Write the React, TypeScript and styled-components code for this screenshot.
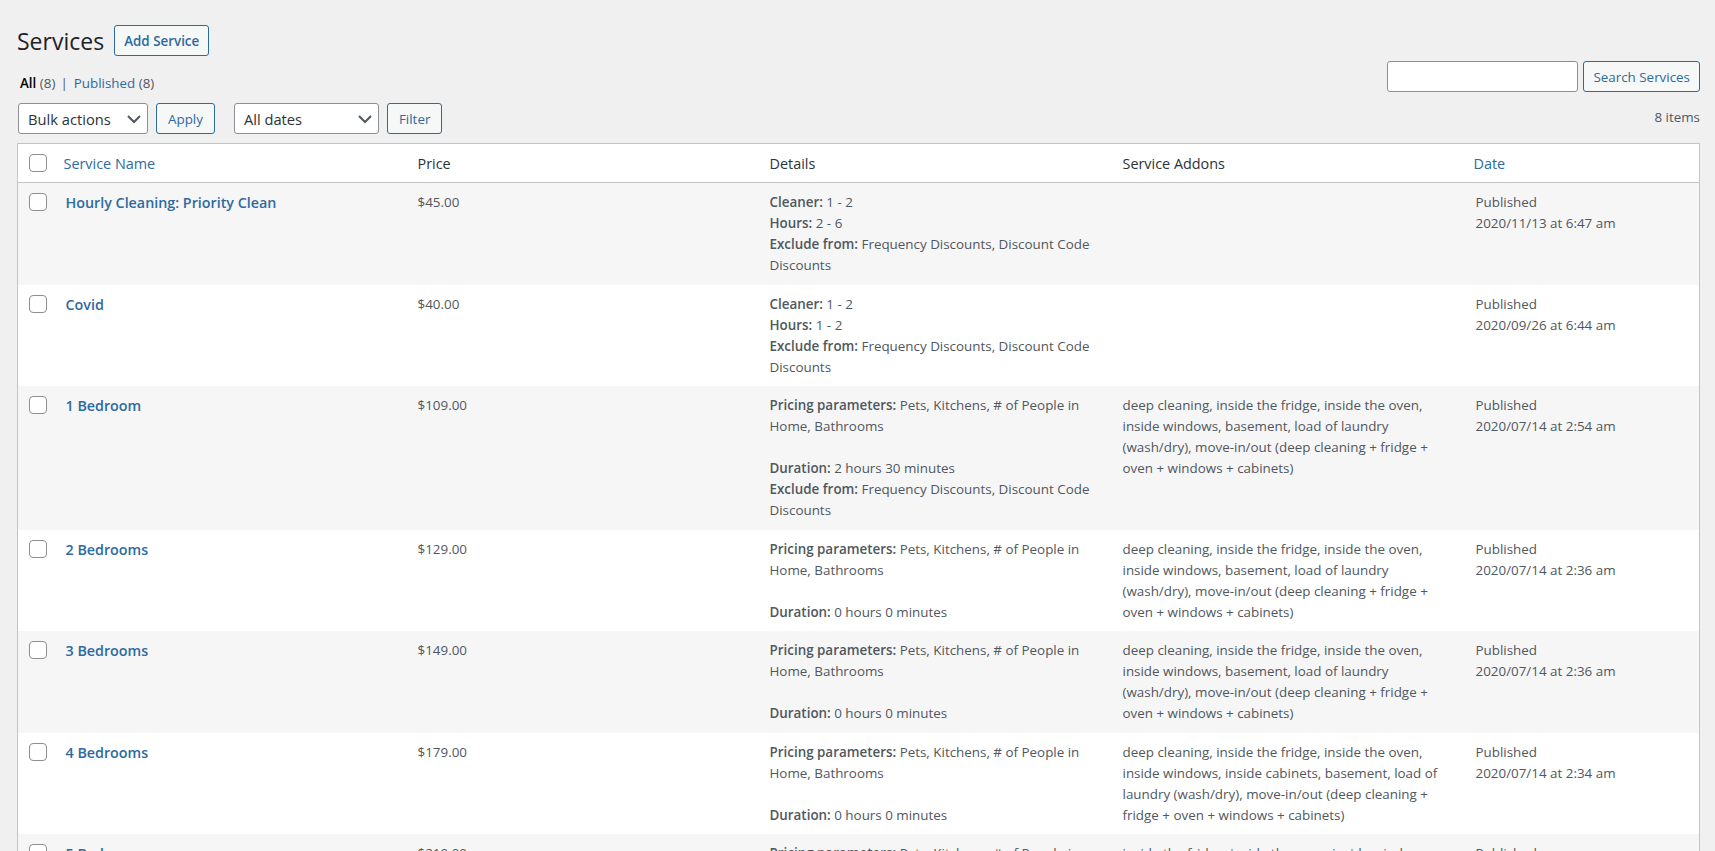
import styled, { createGlobalStyle } from "styled-components";

const GlobalStyle = createGlobalStyle`
  html, body {
    margin: 0;
    height: 851px;
    overflow: hidden;
    background: #f0f0f1;
    font-family: "Open Sans", "Noto Sans", sans-serif;
    font-size: 13.4px;
    color: #50575e;
  }
`;

const Wrap = styled.div`
  padding: 25px 15px 0 17px;
`;

const TitleRow = styled.div`
  display: flex;
  align-items: center;
  gap: 10px;
  height: 31px;
`;

const Title = styled.h1`
  margin: 0;
  font-size: 23px;
  font-weight: 400;
  color: #1d2327;
`;

const Button = styled.button<{ $strong?: boolean; $tight?: boolean }>`
  height: 31px;
  padding: 0 ${(p) => (p.$strong || p.$tight ? 9 : 11)}px;
  border: 1px solid #2d6a9f;
  border-radius: 3px;
  background: #f6f7f7;
  color: #2d6a9f;
  font: inherit;
  font-weight: ${(p) => (p.$strong ? 600 : 400)};
`;

const TopSplit = styled.div`
  display: flex;
  justify-content: space-between;
  align-items: flex-start;
`;

const Tabs = styled.div`
  margin: 17px 0 0 3px;
  line-height: 20px;
`;

const TabLink = styled.a<{ $current?: boolean }>`
  color: ${(p) => (p.$current ? "#000" : "#2d6a9f")};
  font-weight: ${(p) => (p.$current ? 600 : 400)};
`;

const Sep = styled.span`
  margin: 0 6px 0 5px;
`;

const Bar = styled.div`
  display: flex;
  align-items: center;
  margin: 10px 0 0 1px;
  gap: 8px;
`;

const Select = styled.div<{ $w: number; $after?: number }>`
  width: ${(p) => p.$w}px;
  height: 31px;
  box-sizing: border-box;
  padding: 0 3px 0 9px;
  display: flex;
  align-items: center;
  justify-content: space-between;
  border: 1px solid #8c8f94;
  border-radius: 3px;
  background: #fff;
  color: #2c3338;
  font-size: 14.7px;
  margin-left: ${(p) => p.$after ?? 0}px;
`;

const Search = styled.div`
  display: flex;
  gap: 5px;
  margin-top: 36px;
`;

const SearchInput = styled.input`
  width: 191px;
  height: 31px;
  box-sizing: border-box;
  border: 1px solid #8c8f94;
  border-radius: 3px;
  background: #fff;
`;

const Count = styled.div`
  text-align: right;
  margin-top: 15px;
  line-height: 20px;
`;

const Table = styled.table`
  width: 100%;
  margin-top: 9px;
  table-layout: fixed;
  border-collapse: collapse;
  border: 1px solid #c3c4c7;
  background: #fff;
`;

const Th = styled.th<{ $w?: number; $link?: boolean }>`
  box-sizing: border-box;
  width: ${(p) => (p.$w ? `${p.$w}px` : "auto")};
  height: 39px;
  padding: 0 9px;
  text-align: left;
  font-weight: 400;
  font-size: 14.4px;
  color: ${(p) => (p.$link ? "#2d6a9f" : "#2c3338")};
  border-bottom: 1px solid #c3c4c7;
`;

const Tr = styled.tr`
  &:nth-child(odd) {
    background: #f6f6f7;
  }
`;

const Td = styled.td`
  padding: 9px 9px 8.5px;
  vertical-align: top;
  line-height: 21px;
`;

const DateTd = styled(Td)`
  padding-left: 11px;
`;

const NameLink = styled.a`
  display: block;
  margin-left: 2px;
  color: #2d6a9f;
  font-size: 14.3px;
  font-weight: 600;
`;

const CheckCell = styled.td`
  padding: 10px 0 0 11px;
  vertical-align: top;
`;

const CheckHead = styled.th`
  width: 37px;
  padding: 0 0 0 11px;
  box-sizing: border-box;
  border-bottom: 1px solid #c3c4c7;
  text-align: left;
`;

const Check = styled.span`
  display: block;
  box-sizing: border-box;
  width: 18px;
  height: 18px;
  border: 1px solid #8c8f94;
  border-radius: 4px;
  background: #fff;
`;

const Strong = styled.b`
  font-weight: 600;
`;

const Line = styled.div`
  min-height: 21px;
`;

const Chevron = () => (
  <svg width="20" height="20" viewBox="0 0 20 20" fill="none" stroke="#50575e" strokeWidth="2">
    <path d="M4 7l6 6 6-6" />
  </svg>
);

type Part = { label?: string; text?: string };

const pricing = (d: string): Part[] => [
  { label: "Pricing parameters:", text: "Pets, Kitchens, # of People in Home, Bathrooms" },
  {},
  { label: "Duration:", text: d },
];
const exclude: Part = { label: "Exclude from:", text: "Frequency Discounts, Discount Code Discounts" };
const addons =
  "deep cleaning, inside the fridge, inside the oven, inside windows, basement, load of laundry (wash/dry), move-in/out (deep cleaning + fridge + oven + windows + cabinets)";

const rows = [
  {
    name: "Hourly Cleaning: Priority Clean",
    price: "$45.00",
    details: [{ label: "Cleaner:", text: "1 - 2" }, { label: "Hours:", text: "2 - 6" }, exclude],
    addons: "",
    date: "2020/11/13 at 6:47 am",
  },
  {
    name: "Covid",
    price: "$40.00",
    details: [{ label: "Cleaner:", text: "1 - 2" }, { label: "Hours:", text: "1 - 2" }, exclude],
    addons: "",
    date: "2020/09/26 at 6:44 am",
  },
  { name: "1 Bedroom", price: "$109.00", details: [...pricing("2 hours 30 minutes"), exclude], addons, date: "2020/07/14 at 2:54 am" },
  { name: "2 Bedrooms", price: "$129.00", details: pricing("0 hours 0 minutes"), addons, date: "2020/07/14 at 2:36 am" },
  { name: "3 Bedrooms", price: "$149.00", details: pricing("0 hours 0 minutes"), addons, date: "2020/07/14 at 2:36 am" },
  {
    name: "4 Bedrooms",
    price: "$179.00",
    details: pricing("0 hours 0 minutes"),
    addons:
      "deep cleaning, inside the fridge, inside the oven, inside windows, inside cabinets, basement, load of laundry (wash/dry), move-in/out (deep cleaning + fridge + oven + windows + cabinets)",
    date: "2020/07/14 at 2:34 am",
  },
  {
    name: "5 Bedrooms",
    price: "$219.00",
    details: pricing("0 hours 0 minutes"),
    addons: "inside the fridge, inside the oven, inside windows",
    date: "2020/07/14 at 2:34 am",
  },
];

export default function App() {
  return (
    <Wrap>
      <GlobalStyle />
      <TopSplit>
        <div>
          <TitleRow>
            <Title>Services</Title>
            <Button $strong>Add Service</Button>
          </TitleRow>
          <Tabs>
            <TabLink $current>All</TabLink> (8)<Sep>|</Sep><TabLink>Published</TabLink> (8)
          </Tabs>
          <Bar>
            <Select $w={130}>
              Bulk actions <Chevron />
            </Select>
            <Button>Apply</Button>
            <Select $w={145} $after={11}>
              All dates <Chevron />
            </Select>
            <Button>Filter</Button>
          </Bar>
        </div>
        <div>
          <Search>
            <SearchInput />
            <Button $tight>Search Services</Button>
          </Search>
          <Count>8 items</Count>
        </div>
      </TopSplit>
      <Table>
        <thead>
          <tr>
            <CheckHead>
              <Check />
            </CheckHead>
            <Th $w={354} $link>Service Name</Th>
            <Th $w={352}>Price</Th>
            <Th $w={353}>Details</Th>
            <Th $w={351}>Service Addons</Th>
            <Th $link>Date</Th>
          </tr>
        </thead>
        <tbody>
          {rows.map((r) => (
            <Tr key={r.name}>
              <CheckCell>
                <Check />
              </CheckCell>
              <Td>
                <NameLink>{r.name}</NameLink>
              </Td>
              <Td>{r.price}</Td>
              <Td>
                {r.details.map((d, i) => (
                  <Line key={i}>
                    {d.label && <Strong>{d.label}</Strong>} {d.text}
                  </Line>
                ))}
              </Td>
              <Td>{r.addons}</Td>
              <DateTd>
                Published
                <br />
                {r.date}
              </DateTd>
            </Tr>
          ))}
        </tbody>
      </Table>
    </Wrap>
  );
}
